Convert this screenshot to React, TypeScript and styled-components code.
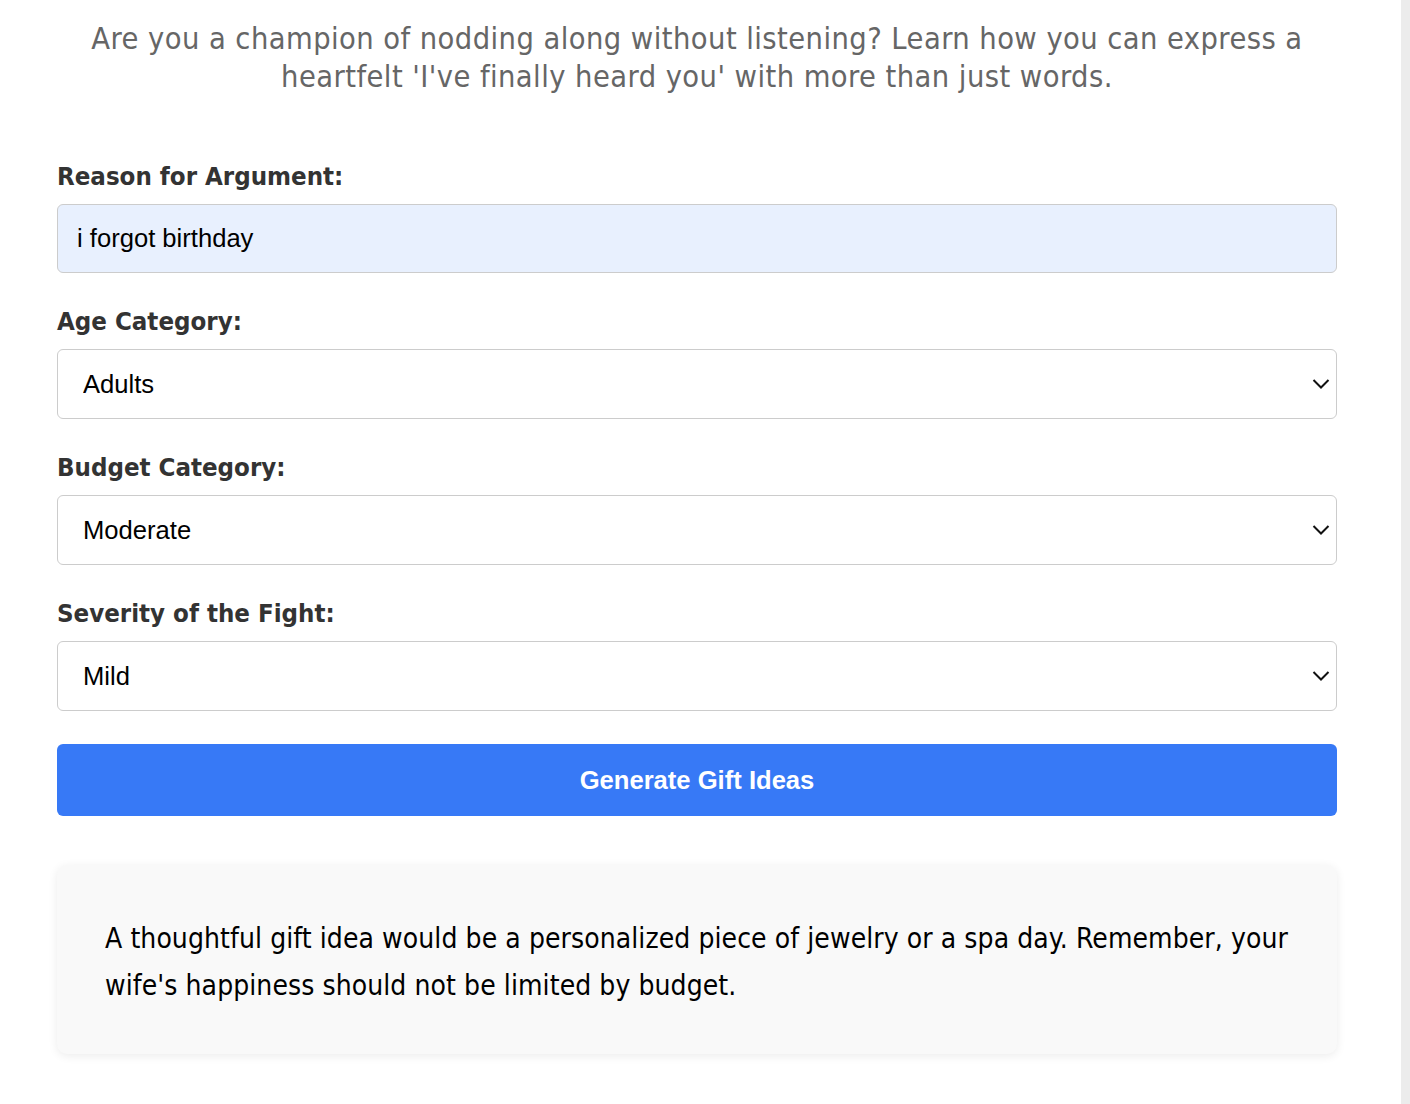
import React, { useState } from "react";
import styled, { createGlobalStyle } from "styled-components";

const GlobalStyle = createGlobalStyle`
  body {
    margin: 0;
    background: #ffffff;
    font-family: Tahoma, "DejaVu Sans Condensed", "DejaVu Sans", sans-serif;
  }
`;

const Page = styled.div`
  display: flex;
  min-height: 100vh;
`;

const Main = styled.main`
  flex: 1;
  background: #ffffff;
`;

const Track = styled.div`
  width: 9px;
  background: #ececec;
`;

const Container = styled.div`
  width: 1280px;
  margin-left: 57px;
  padding-bottom: 40px;
`;

const Intro = styled.p`
  margin: 20px 0 0;
  font-size: 30.5px;
  line-height: 38px;
  letter-spacing: 0.44px;
  color: #666666;
  text-align: center;
`;

const Form = styled.form`
  display: flex;
  flex-direction: column;
  margin-top: 65px;
`;

const Field = styled.div`
  display: flex;
  flex-direction: column;
  margin-bottom: 33px;
`;

const Label = styled.label`
  font-size: 25.6px;
  line-height: 31px;
  font-weight: bold;
  color: #333333;
  margin-bottom: 12px;
`;

const TextInput = styled.input`
  box-sizing: border-box;
  height: 69px;
  padding: 0 19px;
  border: 1px solid #cccccc;
  border-radius: 6px;
  background: #e8f0fe;
  font-family: "Liberation Sans", Arial, sans-serif;
  font-size: 25.6px;
  color: #000000;
  outline: none;
`;

const SelectWrap = styled.div`
  position: relative;
`;

const Select = styled.select`
  box-sizing: border-box;
  width: 100%;
  height: 70px;
  padding: 0 25px;
  border: 1px solid #cccccc;
  border-radius: 6px;
  background: #ffffff;
  font-family: "Liberation Sans", Arial, sans-serif;
  font-size: 25.6px;
  color: #000000;
  appearance: none;
  outline: none;
`;

const Chevron = styled.svg`
  position: absolute;
  right: 7px;
  top: 50%;
  width: 18px;
  height: 11px;
  transform: translateY(-50%);
  pointer-events: none;
`;

const SubmitButton = styled.button`
  height: 72px;
  border: none;
  border-radius: 6px;
  background: #3779f6;
  color: #ffffff;
  font-family: "Liberation Sans", Arial, sans-serif;
  font-size: 25.6px;
  font-weight: bold;
  cursor: pointer;
`;

const Result = styled.div`
  margin-top: 49px;
  padding: 50px 36px 45px 48px;
  background: #f9f9f9;
  border-radius: 10px;
  box-shadow: 0 2px 10px rgba(0, 0, 0, 0.08);
`;

const ResultText = styled.p`
  margin: 0;
  font-size: 28px;
  line-height: 47px;
  letter-spacing: 0.08px;
  color: #000000;
`;

const ChevronIcon = () => (
  <Chevron viewBox="0 0 18 11">
    <path d="M1.5 1.5 L9 9 L16.5 1.5" fill="none" stroke="#111" strokeWidth="2" />
  </Chevron>
);

type SelectFieldProps = {
  label: string;
  value: string;
  options: string[];
  onChange: (v: string) => void;
};

const SelectField = ({ label, value, options, onChange }: SelectFieldProps) => (
  <Field>
    <Label>{label}</Label>
    <SelectWrap>
      <Select value={value} onChange={(e) => onChange(e.target.value)}>
        {options.map((o) => (
          <option key={o}>{o}</option>
        ))}
      </Select>
      <ChevronIcon />
    </SelectWrap>
  </Field>
);

export default function App() {
  const [reason, setReason] = useState("i forgot birthday");
  const [age, setAge] = useState("Adults");
  const [budget, setBudget] = useState("Moderate");
  const [severity, setSeverity] = useState("Mild");

  return (
    <>
      <GlobalStyle />
      <Page>
        <Main>
          <Container>
            <Intro>
              Are you a champion of nodding along without listening? Learn how you can express a
              heartfelt 'I've finally heard you' with more than just words.
            </Intro>
            <Form onSubmit={(e) => e.preventDefault()}>
              <Field>
                <Label>Reason for Argument:</Label>
                <TextInput value={reason} onChange={(e) => setReason(e.target.value)} />
              </Field>
              <SelectField
                label="Age Category:"
                value={age}
                options={["Kids", "Teens", "Adults", "Seniors"]}
                onChange={setAge}
              />
              <SelectField
                label="Budget Category:"
                value={budget}
                options={["Low", "Moderate", "High"]}
                onChange={setBudget}
              />
              <SelectField
                label="Severity of the Fight:"
                value={severity}
                options={["Mild", "Moderate", "Severe"]}
                onChange={setSeverity}
              />
              <SubmitButton type="submit">Generate Gift Ideas</SubmitButton>
            </Form>
            <Result>
              <ResultText>
                A thoughtful gift idea would be a personalized piece of jewelry or a spa day. Remember, your
                wife's happiness should not be limited by budget.
              </ResultText>
            </Result>
          </Container>
        </Main>
        <Track />
      </Page>
    </>
  );
}
